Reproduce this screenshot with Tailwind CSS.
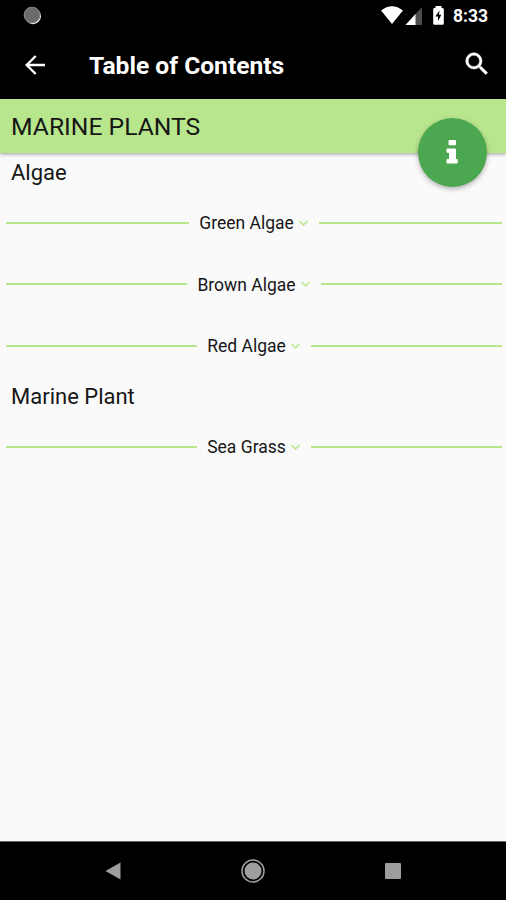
<!DOCTYPE html>
<html lang="en">
<head>
<meta charset="utf-8">
<title>Table of Contents</title>
<script src="https://cdn.jsdelivr.net/npm/@tailwindcss/browser@4"></script>
</head>
<body class="w-[506px] h-[900px] overflow-hidden bg-[#fafafa] text-[#161616] font-[Roboto,sans-serif] flex flex-col">
  <!-- Status bar -->
  <div class="h-8 shrink-0 bg-black flex items-center pl-[23px] pr-[18px] justify-between text-white">
    <svg class="w-[19px] h-[19px] -mt-[2px]" viewBox="0 0 19 19"><circle cx="10" cy="10.2" r="8" fill="#e8e8e8"/><circle cx="9" cy="9" r="8.3" fill="#6b6b6b"/><circle cx="9" cy="9" r="7.7" fill="none" stroke="#858585"/></svg>
    <div class="flex items-center">
      <svg class="w-[108px] h-8 -mr-[35px]" viewBox="380 0 108 32">
        <path d="M381 10.500Q392 2 403 10.500L392 24Z" fill="#fff"/>
        <path d="M422 7V25H405.500Z" fill="#4c4c4c"/><path d="M415.500 14.100V25H405.500Z" fill="#fff"/>
        <path d="M435.500 6h6v2h1q1.300 0 1.300 1.300V23.500q0 1.300-1.300 1.300h-8q-1.300 0-1.300-1.300V9.300Q433.200 8 434.500 8h1z" fill="#fff"/>
        <path d="M439.500 10.500L435.300 16.500H438V21L441.400 14.800H439z" fill="#000"/>
      </svg>
      <span class="text-[17.500px] leading-8 font-bold w-[35px] whitespace-nowrap">8:33</span>
    </div>
  </div>
  <!-- App bar -->
  <header class="h-[67px] shrink-0 bg-black text-white flex items-center pl-[22px] pr-[14px]">
    <svg class="w-[26px] h-[26px] -mt-[2px]" viewBox="0 0 26 26" fill="none" stroke="#fff" stroke-width="2.400"><path d="M23 13H5M13.700 4L4.700 13l9 9"/></svg>
    <h1 class="ml-[41px] text-[24.600px] leading-[32px] font-bold whitespace-nowrap flex-1">Table of Contents</h1>
    <svg class="w-[30px] h-[30px] -mt-[4px]" viewBox="0 0 24 24" fill="#fff" stroke="#fff" stroke-width=".4"><path d="M15.500 14h-.79l-.28-.27A6.470 6.470 0 0 0 16 9.500 6.500 6.500 0 1 0 9.500 16c1.610 0 3.090-.59 4.230-1.570l.27.28v.79l5 4.990L20.490 19l-4.990-5zm-6 0C7.010 14 5 11.990 5 9.500S7.010 5 9.500 5 14 7.010 14 9.500 11.990 14 9.500 14z"/></svg>
  </header>
  <!-- Category heading with info button -->
  <section class="relative h-[54px] shrink-0 bg-[#b8e68c] flex items-center pl-[11px] shadow-[0_1px_4px_rgba(0,0,0,0.4)]">
    <h2 class="text-[24.700px] leading-[54px] pt-px whitespace-nowrap">MARINE PLANTS</h2>
    <button aria-label="Information" class="absolute left-[418px] top-[19px] w-[69px] h-[69px] rounded-full bg-[#4ca850] shadow-[0_2px_5px_rgba(0,0,0,0.3)]">
      <svg class="w-full h-full" viewBox="0 0 69 69" fill="#fff"><path d="M31.500 22h5.500q1 0 1 1v3.200q0 1-1 1h-5.500q-1 0-1-1V23q0-1 1-1zM29.500 30.500h7.500q1 0 1 1v9.500h.8q1 0 1 1v2.400q0 1-1 1h-9.300q-1 0-1-1V42q0-1 1-1h1.500v-6.300h-1.500q-1 0-1-1v-2.200q0-1 1-1z"/></svg>
    </button>
  </section>
  <!-- Contents -->
  <main class="flex-1 pl-[6px] pr-[4px]">
    <h3 class="h-[39px] pl-[5px] text-[22px] leading-[40px]">Algae</h3>
    <div class="h-[61px] flex items-center">
      <i class="flex-1 h-[2px] bg-[#b8e68c]"></i>
      <span class="ml-[10px] text-[17.500px] leading-[24px] pt-px whitespace-nowrap">Green Algae</span>
      <svg class="w-[11px] h-[8px] ml-[4px] mr-[10px]" viewBox="0 0 11 8" fill="none" stroke="#b8e68c" stroke-width="1.500"><path d="M1.500 2L5.500 6l4-4"/></svg>
      <i class="flex-1 h-[2px] bg-[#b8e68c]"></i>
    </div>
    <div class="h-[62px] flex items-center">
      <i class="flex-1 h-[2px] bg-[#b8e68c]"></i>
      <span class="ml-[10px] text-[17.500px] leading-[24px] pt-px whitespace-nowrap">Brown Algae</span>
      <svg class="w-[11px] h-[8px] ml-[4px] mr-[10px]" viewBox="0 0 11 8" fill="none" stroke="#b8e68c" stroke-width="1.500"><path d="M1.500 2L5.500 6l4-4"/></svg>
      <i class="flex-1 h-[2px] bg-[#b8e68c]"></i>
    </div>
    <div class="h-[61px] flex items-center">
      <i class="flex-1 h-[2px] bg-[#b8e68c]"></i>
      <span class="ml-[10px] text-[17.500px] leading-[24px] pt-px whitespace-nowrap">Red Algae</span>
      <svg class="w-[11px] h-[8px] ml-[4px] mr-[10px]" viewBox="0 0 11 8" fill="none" stroke="#b8e68c" stroke-width="1.500"><path d="M1.500 2L5.500 6l4-4"/></svg>
      <i class="flex-1 h-[2px] bg-[#b8e68c]"></i>
    </div>
    <h3 class="h-[40px] pl-[5px] text-[22px] leading-[42px]">Marine Plant</h3>
    <div class="h-[61px] flex items-center">
      <i class="flex-1 h-[2px] bg-[#b8e68c]"></i>
      <span class="ml-[10px] text-[17.500px] leading-[24px] pt-px whitespace-nowrap">Sea Grass</span>
      <svg class="w-[11px] h-[8px] ml-[4px] mr-[10px]" viewBox="0 0 11 8" fill="none" stroke="#b8e68c" stroke-width="1.500"><path d="M1.500 2L5.500 6l4-4"/></svg>
      <i class="flex-1 h-[2px] bg-[#b8e68c]"></i>
    </div>
  </main>
  <!-- System navigation -->
  <nav class="h-[59px] shrink-0 bg-black border-t border-[#666] flex items-center justify-between pl-[105px] pr-[105px]">
    <svg class="w-4 h-[18px]" viewBox="0 0 16 18"><path d="M.500 9L15.500.500v17z" fill="#9e9e9e"/></svg>
    <svg class="w-6 h-6" viewBox="0 0 24 24"><circle cx="12" cy="12" r="11" fill="none" stroke="#9e9e9e" stroke-width="1.500"/><circle cx="12" cy="12" r="8.500" fill="#9e9e9e"/></svg>
    <svg class="w-4 h-4" viewBox="0 0 16 16"><rect width="16" height="16" rx="1" fill="#9e9e9e"/></svg>
  </nav>
</body>
</html>
